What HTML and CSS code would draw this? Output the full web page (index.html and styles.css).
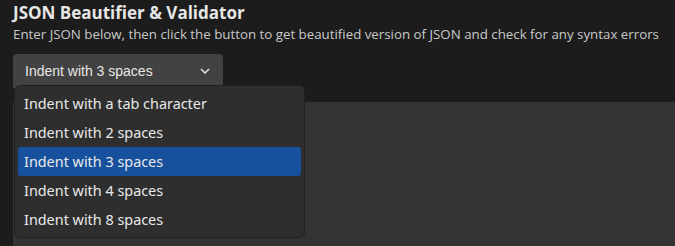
FILE: index.html
```html
<!DOCTYPE html>
<html lang="en">
<head>
    <meta charset="UTF-8">
    <meta name="viewport" content="width=device-width, initial-scale=1.0">
    <title>JSON Beautifier &amp; Validator</title>
    <link rel="stylesheet" href="styles.css">
</head>
<body>
    <div class="tool">
        <h1>JSON Beautifier &amp; Validator</h1>
        <p class="intro">Enter JSON below, then click the button to get beautified version of JSON and check for any syntax errors</p>

        <div class="picker">
            <div class="select">
                <span>Indent with 3 spaces</span>
                <svg class="chevron" width="10" height="6" viewBox="0 0 10 6">
                    <path d="M1 1l4 4 4-4" fill="none" stroke="#e0e0e0" stroke-width="1.6"/>
                </svg>
            </div>
            <ul class="menu">
                <li>Indent with a tab character</li>
                <li>Indent with 2 spaces</li>
                <li class="active">Indent with 3 spaces</li>
                <li>Indent with 4 spaces</li>
                <li>Indent with 8 spaces</li>
            </ul>
        </div>

        <div class="editor"></div>
    </div>
</body>
</html>
```

FILE: styles.css
```css
body {
    margin: 0;
    background-color: #1c1c1c;
    font-family: "Liberation Sans", Arial, sans-serif;
    color: #e4e4e4;
}
.tool {
    padding: 1px 0 0 13px;
}
h1 {
    margin: 0;
    font-family: "Open Sans", sans-serif;
    font-size: 17px;
    font-weight: 700;
    line-height: 24px;
    color: #e6e6e6;
}
.intro {
    margin: 0;
    font-family: "Open Sans", sans-serif;
    font-size: 13.3px;
    line-height: 18px;
    color: #c9c9c9;
}
.picker {
    position: relative;
    margin-top: 11px;
}
.select {
    width: 210px;
    height: 34px;
    box-sizing: border-box;
    padding: 0 13px 0 12px;
    display: flex;
    align-items: center;
    justify-content: space-between;
    background-color: #424242;
    border-radius: 4px 4px 0 0;
    font-size: 14px;
    color: #e6e6e6;
}
.menu {
    position: absolute;
    top: 31px;
    left: 1px;
    width: 291px;
    box-sizing: border-box;
    margin: 0;
    padding: 3px 3px;
    list-style: none;
    background-color: #2e2e2e;
    border: 1px solid #202020;
    border-radius: 6px;
    font-family: "Noto Sans", sans-serif;
    font-size: 14.4px;
    color: #e8e8e8;
    z-index: 2;
}
.menu li {
    height: 29px;
    line-height: 29px;
    padding-left: 6px;
    border-radius: 3px;
}
.menu li.active {
    background-color: #17519d;
}
.editor {
    height: 150px;
    margin-top: 14px;
    background-color: #333333;
}
```
